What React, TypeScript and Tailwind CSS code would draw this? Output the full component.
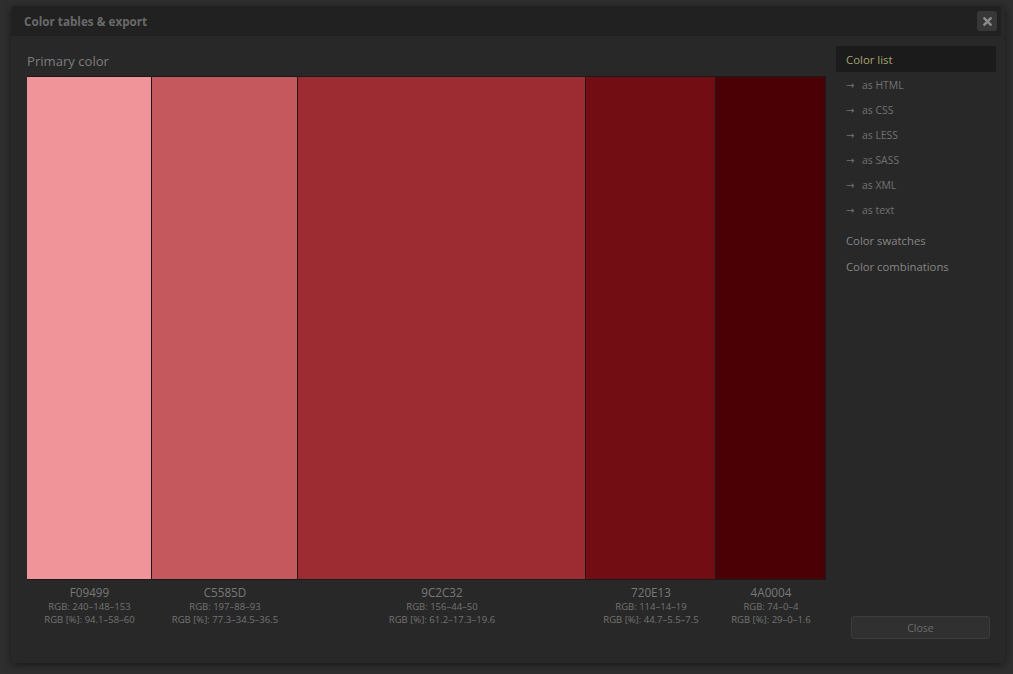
import { FaTimes } from 'react-icons/fa';

const COLORS = [
  { hex: 'F09499', rgb: '240–148–153', pct: '94.1–58–60', bg: 'bg-[#f09499]', w: 'w-[125px]' },
  { hex: 'C5585D', rgb: '197–88–93', pct: '77.3–34.5–36.5', bg: 'bg-[#c5585d]', w: 'w-[146px]' },
  { hex: '9C2C32', rgb: '156–44–50', pct: '61.2–17.3–19.6', bg: 'bg-[#9c2c32]', w: 'w-[288px]' },
  { hex: '720E13', rgb: '114–14–19', pct: '44.7–5.5–7.5', bg: 'bg-[#720e13]', w: 'w-[130px]' },
  { hex: '4A0004', rgb: '74–0–4', pct: '29–0–1.6', bg: 'bg-[#4a0004]', w: 'w-[110px]' },
];

const EXPORTS = ['as HTML', 'as CSS', 'as LESS', 'as SASS', 'as XML', 'as text'];

export default function App() {
  return (
    <div className="h-[674px] overflow-hidden bg-[#2f2f2f] pl-[11px] pr-2 pt-[6px] font-['Open_Sans',sans-serif]">
      <div className="h-[657px] rounded-[3px] bg-[#282828] shadow-[0_2px_10px_rgba(0,0,0,0.5)]">
        {/* Title bar */}
        <div className="mr-1 flex h-[30px] items-center justify-between rounded-[3px] bg-[#212121] pl-[13px] pr-1">
          <h1 className="pt-px text-[11.7px] font-bold text-[#6a6a6a]">Color tables &amp; export</h1>
          <button className="flex h-5 w-5 items-center justify-center rounded-[3px] bg-[#373737] text-[#8c8c8c]">
            <FaTimes className="h-[13px] w-[13px]" />
          </button>
        </div>

        <div className="flex">
          {/* Main */}
          <div className="ml-4 w-[799px]">
            <h2 className="mt-[15px] h-[25px] text-[13.1px] leading-[20px] text-[#7d7d7d]">Primary color</h2>
            <div className="flex h-[504px] border border-[#1a1a1a] border-l-0">
              {COLORS.map((c, i) => (
                <div
                  key={c.hex}
                  className={`${i === 2 ? 'w-[289px]' : i === 4 ? 'w-[109px]' : c.w} ${c.bg} border-r border-[#1a1a1a] last:border-r-0`}
                />
              ))}
            </div>
            <div className="mt-[4px] flex text-center text-[9.5px] leading-[13px] text-[#737373]">
              {COLORS.map((c) => (
                <div key={c.hex} className={c.w}>
                  <div className="h-4 text-[11.7px] leading-[17px] text-[#787878]">{c.hex}</div>
                  <div>RGB: {c.rgb}</div>
                  <div>RGB [%]: {c.pct}</div>
                </div>
              ))}
            </div>
          </div>

          {/* Sidebar */}
          <div className="ml-[10px] flex h-[627px] w-[160px] flex-col pt-[10px]">
            <div className="flex h-[26px] items-center bg-[#1b1b1b] pl-[10px] pt-[2px] text-[11.4px] text-[#a5a36f]">Color list</div>
            <ul className="text-[10.4px] text-[#727272]">
              {EXPORTS.map((e) => (
                <li key={e} className="flex h-[25px] items-center pl-[10px] pt-[2px]">
                  <span className="w-[16px] font-['DejaVu_Sans',sans-serif] text-[10px]">→</span>
                  {e}
                </li>
              ))}
            </ul>
            <div className="mt-[6px] flex h-[26px] items-center pl-[10px] text-[11.3px] text-[#868686]">Color swatches</div>
            <div className="flex h-[26px] items-center pl-[10px] text-[11.3px] text-[#868686]">Color combinations</div>
            <button className="ml-[15px] mt-auto mb-[24px] h-[23px] w-[139px] rounded-[3px] border border-[#3c3c3c] bg-[#303030] pt-[2px] text-[10.5px] text-[#6c6c6c]">
              Close
            </button>
          </div>
        </div>
      </div>
    </div>
  );
}
